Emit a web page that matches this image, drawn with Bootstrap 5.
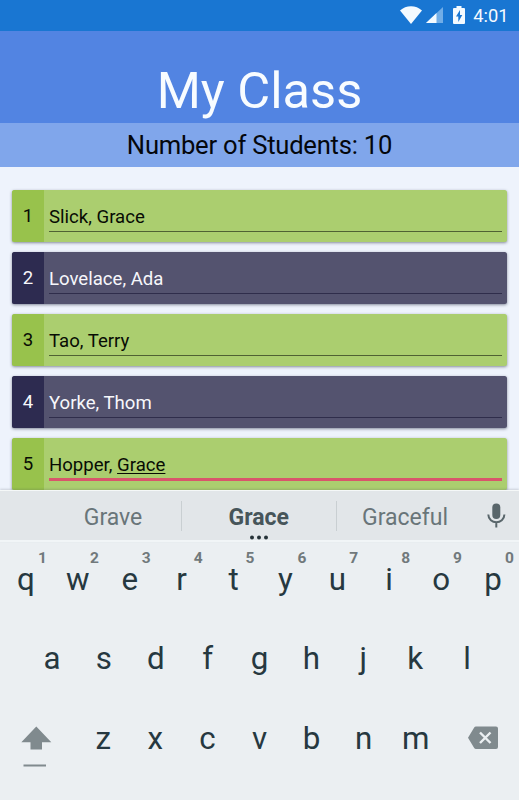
<!DOCTYPE html>
<html lang="en">
<head>
<meta charset="utf-8">
<meta name="viewport" content="width=device-width, initial-scale=1">
<title>My Class</title>
<link href="https://cdn.jsdelivr.net/npm/bootstrap@5.3.0/dist/css/bootstrap.min.css" rel="stylesheet">
<style>
  body { font-family: Roboto, "Liberation Sans", sans-serif; background: #eef3fc; width: 519px; height: 800px; }
  .status-bar { height: 31px; background: #1976d2; color: #f4faff; padding: 0 10.5px 0 0; }
  .status-bar .clock { font-size: 18.3px; line-height: 31px; margin-left: 8px; }
  .status-icon { margin-top: -1px; }
  .title-bar { height: 92px; background: #5284e2; padding-top: 30px; }
  .title-bar h1 { font-size: 50.6px; line-height: 60px; font-weight: 400; color: #f8fcff; }
  .count-bar { height: 44px; background: #80a6eb; font-size: 25.6px; letter-spacing: -.23px; line-height: 45px; color: #04070c; }
  .students { height: 323px; padding: 23px 12.5px 0 12px; gap: 10px; }
  .student { height: 52px; border-radius: 2.5px; font-size: 18.6px; background: #abce6f; color: #080c04; box-shadow: 0 1px 3px rgba(30,35,60,.5); }
  .student .num { width: 32px; line-height: 53.5px; background: #98c24c; }
  .student .field { margin: 0 4.5px 10px 5px; border-bottom: 1px solid #4f6133; line-height: 54px; height: 42px; }
  .student.dark { background: #54536f; color: #f7f7fb; }
  .student.dark .num { background: #2d2b50; }
  .student.dark .field { border-color: #2f2d4b; }
  .student.active .field { border-bottom: 3px solid #d8566b; height: 43px; }
  .composing { text-decoration: underline; text-decoration-thickness: 1px; text-underline-offset: 2px; }
  .keyboard { height: 310px; background: #ebeff2; color: #263840; }
  .suggestions { height: 52px; background: #e2e6e9; border-top: 1px solid #f5f8f8; border-bottom: 2px solid #f1f5f7; font-size: 23px; line-height: 54px; color: #697579; box-shadow: 0 -1px 2px rgba(60,70,80,.2); padding-left: 45px; }
  .word { width: 153.5px; }
  .word.first { width: 136px; }
  .word.last { width: 137px; }
  .word.best { color: #47555a; font-weight: 700; }
  .divider { width: 1px; height: 30px; background: #c9cfd2; margin-top: 10px; }
  .more { left: 0; right: 0; top: 43.5px; line-height: 0; }
  .mic { margin: 7.5px 0 0 13px; }
  .key-row { height: 79.3px; font-size: 31.3px; line-height: 76px; }
  .key { width: 51.9px; }
  .hint { right: 5px; top: 7px; font-size: 15.5px; line-height: 18px; font-weight: 700; color: #71797c; }
  .edge-icon { margin-top: -10px; }
</style>
</head>
<body class="overflow-hidden">
  <div class="status-bar d-flex align-items-center justify-content-end">
    <svg class="status-icon" width="22" height="18" viewBox="0 0 22 18"><path d="M0 4.6C6-1.2 16-1.2 22 4.6L11 18Z" fill="#f4faff"/></svg>
    <svg class="status-icon ms-1" width="17" height="16" viewBox="0 0 17 16"><path d="M0 16 17 0V16Z" fill="#71ade7"/><path d="M0 16 10.5 6V16Z" fill="#f4faff"/></svg>
    <svg class="status-icon" width="12" height="18" viewBox="0 0 12 18" style="margin-left:10.5px"><path d="M3.5 0h5v2H11a1 1 0 0 1 1 1v14a1 1 0 0 1-1 1H1a1 1 0 0 1-1-1V3a1 1 0 0 1 1-1h2.5Z" fill="#f4faff"/><path d="M7 4 3 10.5h2.3V16L9.3 9H7Z" fill="#1976d2"/></svg>
    <span class="clock">4:01</span>
  </div>
  <header class="title-bar text-center"><h1 class="m-0">My Class</h1></header>
  <div class="count-bar text-center">Number of Students: 10</div>

  <main class="students d-flex flex-column">
    <div class="student d-flex flex-shrink-0 overflow-hidden"><div class="num text-center">1</div><div class="field flex-grow-1">Slick, Grace</div></div>
    <div class="student dark d-flex flex-shrink-0 overflow-hidden"><div class="num text-center">2</div><div class="field flex-grow-1">Lovelace, Ada</div></div>
    <div class="student d-flex flex-shrink-0 overflow-hidden"><div class="num text-center">3</div><div class="field flex-grow-1">Tao, Terry</div></div>
    <div class="student dark d-flex flex-shrink-0 overflow-hidden"><div class="num text-center">4</div><div class="field flex-grow-1">Yorke, Thom</div></div>
    <div class="student active d-flex flex-shrink-0 overflow-hidden"><div class="num text-center">5</div><div class="field flex-grow-1">Hopper, <span class="composing">Grace</span></div></div>
  </main>

  <section class="keyboard position-relative">
    <div class="suggestions d-flex text-center">
      <div class="word first">Grave</div>
      <div class="divider"></div>
      <div class="word best position-relative">Grace
        <div class="more position-absolute"><svg width="18" height="5" viewBox="0 0 18 5" fill="#263238"><circle cx="2" cy="2.5" r="2"/><circle cx="9" cy="2.5" r="2"/><circle cx="16" cy="2.5" r="2"/></svg></div>
      </div>
      <div class="divider"></div>
      <div class="word last">Graceful</div>
      <svg class="mic" width="19" height="35" viewBox="0 0 19 35"><rect x="5.3" y="4.5" width="8" height="15.5" rx="4" fill="#59666b"/><path d="M1.3 15.5C1.5 25.8 17.2 25.8 17.4 15.5M9.3 23v5.5" fill="none" stroke="#59666b" stroke-width="2"/></svg>
    </div>
    <div class="key-row d-flex text-center">
      <div class="key position-relative">q<span class="hint position-absolute">1</span></div>
      <div class="key position-relative">w<span class="hint position-absolute">2</span></div>
      <div class="key position-relative">e<span class="hint position-absolute">3</span></div>
      <div class="key position-relative">r<span class="hint position-absolute">4</span></div>
      <div class="key position-relative">t<span class="hint position-absolute">5</span></div>
      <div class="key position-relative">y<span class="hint position-absolute">6</span></div>
      <div class="key position-relative">u<span class="hint position-absolute">7</span></div>
      <div class="key position-relative">i<span class="hint position-absolute">8</span></div>
      <div class="key position-relative">o<span class="hint position-absolute">9</span></div>
      <div class="key position-relative">p<span class="hint position-absolute">0</span></div>
    </div>
    <div class="key-row d-flex justify-content-center text-center">
      <div class="key">a</div><div class="key">s</div><div class="key">d</div><div class="key">f</div><div class="key">g</div><div class="key">h</div><div class="key">j</div><div class="key">k</div><div class="key">l</div>
    </div>
    <div class="key-row d-flex justify-content-between text-center">
      <svg class="edge-icon" width="77" height="79" viewBox="0 0 77 79" fill="#808a8e"><path d="M36.3 35.5 51.3 51.3H42V58.5H30.5V51.3H21.3Z"/><rect x="23.5" y="73.5" width="22.5" height="2"/></svg>
      <div class="key">z</div><div class="key">x</div><div class="key">c</div><div class="key">v</div><div class="key">b</div><div class="key">n</div><div class="key">m</div>
      <svg class="edge-icon" width="77" height="79" viewBox="0 0 77 79"><path d="M34 35.5H54Q56 35.5 56 37.5V56Q56 58 54 58H34Q32.8 58 32.2 57L26 46.8 32.2 36.5Q32.8 35.5 34 35.5Z" fill="#808a8e"/><path d="m38 41.5 10.5 10.5m0-10.5L38 52" stroke="#ebeff2" stroke-width="2.4"/></svg>
    </div>
  </section>
<script src="https://cdn.jsdelivr.net/npm/bootstrap@5.3.0/dist/js/bootstrap.bundle.min.js"></script>
</body>
</html>
